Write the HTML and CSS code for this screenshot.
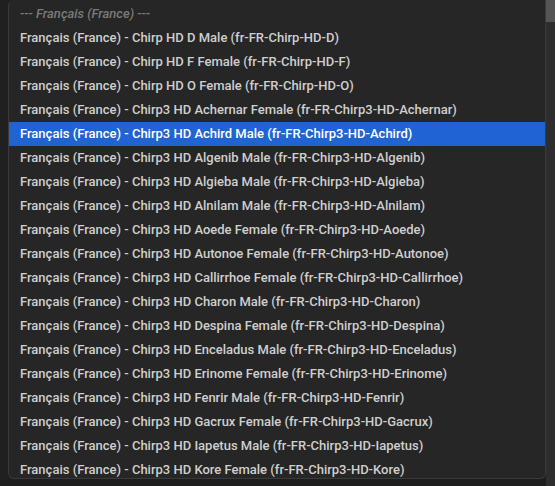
FILE: index.html
```html
<!DOCTYPE html>
<html lang="fr">
<head>
  <meta charset="UTF-8">
  <meta name="viewport" content="width=device-width, initial-scale=1.0">
  <title>Voix</title>
  <link rel="stylesheet" href="styles.css">
</head>
<body>
  <div class="page">
    <div class="gutter"></div>
    <div class="list">
      <div class="group">--- Français (France) ---</div>
      <div class="opt">Français (France) - Chirp HD D Male (fr-FR-Chirp-HD-D)</div>
      <div class="opt">Français (France) - Chirp HD F Female (fr-FR-Chirp-HD-F)</div>
      <div class="opt">Français (France) - Chirp HD O Female (fr-FR-Chirp-HD-O)</div>
      <div class="opt">Français (France) - Chirp3 HD Achernar Female (fr-FR-Chirp3-HD-Achernar)</div>
      <div class="opt selected">Français (France) - Chirp3 HD Achird Male (fr-FR-Chirp3-HD-Achird)</div>
      <div class="opt">Français (France) - Chirp3 HD Algenib Male (fr-FR-Chirp3-HD-Algenib)</div>
      <div class="opt">Français (France) - Chirp3 HD Algieba Male (fr-FR-Chirp3-HD-Algieba)</div>
      <div class="opt">Français (France) - Chirp3 HD Alnilam Male (fr-FR-Chirp3-HD-Alnilam)</div>
      <div class="opt">Français (France) - Chirp3 HD Aoede Female (fr-FR-Chirp3-HD-Aoede)</div>
      <div class="opt">Français (France) - Chirp3 HD Autonoe Female (fr-FR-Chirp3-HD-Autonoe)</div>
      <div class="opt">Français (France) - Chirp3 HD Callirrhoe Female (fr-FR-Chirp3-HD-Callirrhoe)</div>
      <div class="opt">Français (France) - Chirp3 HD Charon Male (fr-FR-Chirp3-HD-Charon)</div>
      <div class="opt">Français (France) - Chirp3 HD Despina Female (fr-FR-Chirp3-HD-Despina)</div>
      <div class="opt">Français (France) - Chirp3 HD Enceladus Male (fr-FR-Chirp3-HD-Enceladus)</div>
      <div class="opt">Français (France) - Chirp3 HD Erinome Female (fr-FR-Chirp3-HD-Erinome)</div>
      <div class="opt">Français (France) - Chirp3 HD Fenrir Male (fr-FR-Chirp3-HD-Fenrir)</div>
      <div class="opt">Français (France) - Chirp3 HD Gacrux Female (fr-FR-Chirp3-HD-Gacrux)</div>
      <div class="opt">Français (France) - Chirp3 HD Iapetus Male (fr-FR-Chirp3-HD-Iapetus)</div>
      <div class="opt">Français (France) - Chirp3 HD Kore Female (fr-FR-Chirp3-HD-Kore)</div>
    </div>
    <div class="scroll">
      <div class="thumb"></div>
    </div>
  </div>
</body>
</html>
```

FILE: styles.css
```css
*{margin: 0; padding: 0; box-sizing: border-box;}

body{
  background-color: #1e1e1e;
  font-family: Roboto, "Liberation Sans", sans-serif;
  height: 486px;
  overflow: hidden;
}

.page{
  display: flex;
  height: 486px;
}

.gutter{
  width: 8px;
  height: 479px;
  background-color: #202020;
}

.list{
  width: 538px;
  height: 479px;
  padding-top: 2px;
  background-color: #262626;
  border: 1px solid #3a3a3a;
  border-top: none;
  border-radius: 0 0 6px 6px;
  border-top-left-radius: 6px;
  overflow: hidden;
}

.group,
.opt{
  height: 24px;
  line-height: 24px;
  padding-left: 11px;
  font-size: 13px;
  white-space: nowrap;
}

.group{
  color: #7a7a7a;
  font-style: italic;
  font-weight: 500;
}

.opt{
  color: #cfcfcf;
  font-weight: 500;
}

.selected{
  background-color: #1f64d2;
  color: #ffffff;
}

.scroll{
  width: 9px;
  height: 486px;
  background-color: #2e2e2e;
}

.thumb{
  height: 22px;
  background-color: #555555;
}
```
